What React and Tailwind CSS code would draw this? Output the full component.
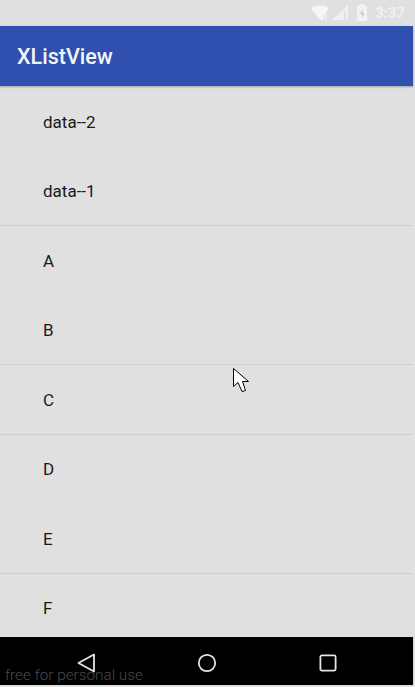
const rows = [
  { label: "data--2", h: "h-[70px]", pad: "pt-[4px]" },
  { label: "data--1", h: "h-[70px]", pad: "pt-[2px]", line: true },
  { label: "A", h: "h-[70px]", pad: "pt-[2px]" },
  { label: "B", h: "h-[69px]", pad: "pt-[2px]", line: true },
  { label: "C", h: "h-[70px]", pad: "pt-[2px]", line: true },
  { label: "D", h: "h-[70px]", pad: "pt-0" },
  { label: "E", h: "h-[69px]", pad: "pt-[2px]", line: true },
  { label: "F", h: "h-[69px]", pad: "pt-0" },
];

function StatusIcons() {
  return (
    <div className="flex items-center justify-end h-[26px] pr-[8px] text-[#f0f0f0]">
      {/* wifi */}
      <svg width="20" height="16" viewBox="0 0 20 16" className="mr-[1px]">
        <path d="M0 3.5C5 -1 13 -1 18 3.5L12.5 10V15H9.5Z" fill="#f6f6f6" />
        <rect x="13.5" y="8" width="1.8" height="5" fill="#f6f6f6" />
        <rect x="13.5" y="13.5" width="1.8" height="1.5" fill="#f6f6f6" />
      </svg>
      {/* signal */}
      <svg width="18" height="16" viewBox="0 0 18 16" className="mr-[6px]">
        <path d="M0 15L16 0V15Z" fill="#f0f0f0" />
        <rect x="12" y="7" width="1.6" height="8" fill="#dedede" />
      </svg>
      {/* battery */}
      <svg width="12" height="18" viewBox="0 0 12 18" className="mr-[7px]">
        <path d="M3.5 0H8.5V2H11V17H1V2H3.5Z" fill="#f2f2f2" />
        <path d="M7 5L4 10H6V14L8.5 9H6.5Z" fill="#c8c8c8" />
      </svg>
      <span className="font-['Roboto',sans-serif] font-bold text-[15px] leading-none">3:37</span>
    </div>
  );
}

function Cursor() {
  return (
    <svg
      width="16"
      height="26"
      viewBox="0 0 16 26"
      className="absolute left-[233px] top-[368px]"
    >
      <path
        d="M0.5 0.5V18.5L5 14.5L9 23.5L12.5 22.5L9.5 13.5H15.5Z"
        fill="#fff"
        stroke="#000"
        strokeWidth="1"
      />
    </svg>
  );
}

export default function App() {
  return (
    <div className="relative h-[687px] w-[415px] overflow-hidden bg-[#e0e0e0] font-['Roboto',sans-serif]">
      <div className="w-[413px]">
        <StatusIcons />
        <header className="flex h-[60px] items-center bg-[#2f50ae] pl-[17px] shadow-[0_1px_2px_rgba(0,0,0,0.3)]">
          <h1 className="pt-[2px] text-[21.5px] font-medium text-[#f2f4fa]">XListView</h1>
        </header>
        <ul className="h-[551px] overflow-hidden">
          {rows.map((r) => (
            <li
              key={r.label}
              className={`flex ${r.h} ${r.pad} items-center pl-[43px] text-[17px] text-[#1a1a1a] ${r.line ? "border-b border-[#cfcfcf]" : ""}`}
            >
              {r.label}
            </li>
          ))}
        </ul>
        <nav className="relative flex h-[48px] items-center bg-black">
          <div className="flex w-full items-center pt-[4px]">
            <svg width="20" height="20" viewBox="0 0 20 20" className="ml-[76px]">
              <path d="M18 1.5V18.5L2.5 10Z" fill="none" stroke="#e4e4e4" strokeWidth="1.8" strokeLinejoin="round" />
            </svg>
            <svg width="20" height="20" viewBox="0 0 20 20" className="ml-[101px]">
              <circle cx="10" cy="10" r="8.2" fill="none" stroke="#e4e4e4" strokeWidth="1.8" />
            </svg>
            <svg width="18" height="18" viewBox="0 0 18 18" className="ml-[102px]">
              <rect x="1.4" y="1.4" width="15.2" height="15.2" rx="1.5" fill="none" stroke="#e4e4e4" strokeWidth="1.8" />
            </svg>
          </div>
          <span className="absolute bottom-[2px] left-[5px] text-[15.3px] font-light leading-none text-[#4a4a4a]">
            free for personal use
          </span>
        </nav>
      </div>
      <Cursor />
    </div>
  );
}
